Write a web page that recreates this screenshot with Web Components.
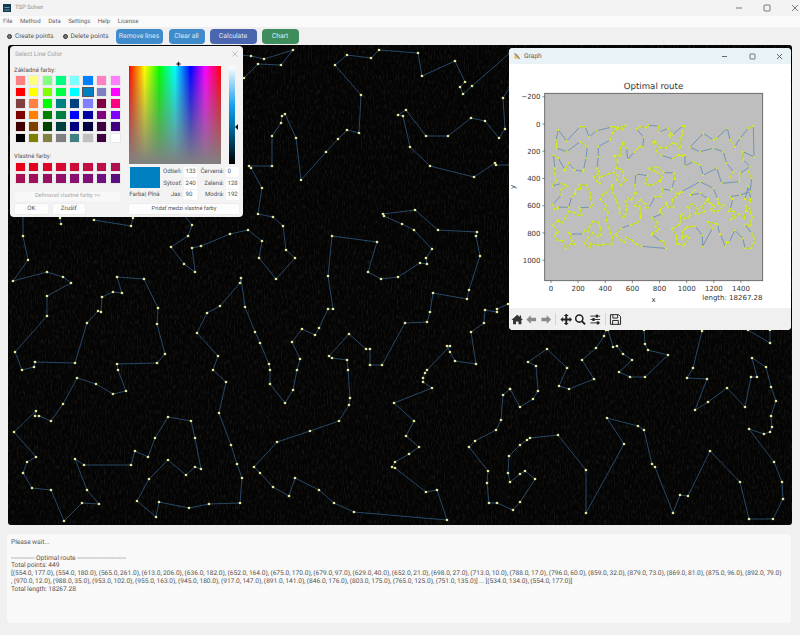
<!DOCTYPE html>
<html>
<head>
<meta charset="utf-8">
<title>TSP Solver</title>
<style>
  html, body { margin: 0; padding: 0; background: #f0f0f0; }
  body { width: 800px; height: 635px; overflow: hidden; font-family: Roboto, "Liberation Sans", sans-serif; text-rendering: geometricPrecision; }
  tsp-app { width: 800px; height: 635px; }
</style>
</head>
<body>
<tsp-app>
  <title-bar slot="title">TSP Solver</title-bar>
  <menu-bar slot="menu"></menu-bar>
  <tool-bar slot="tools">
    <radio-option>Create points</radio-option>
    <radio-option style="margin-left:9px">Delete points</radio-option>
    <app-button style="margin-left:7px;width:47px" color="#3f8bcb">Remove lines</app-button>
    <app-button style="margin-left:6px;width:36px" color="#3f8bcb">Clear all</app-button>
    <app-button style="margin-left:5px;width:47px" color="#4a66ae">Calculate</app-button>
    <app-button style="margin-left:5px;width:37px" color="#3f8c5c">Chart</app-button>
  </tool-bar>
  <tsp-stage slot="stage">
    <tsp-canvas></tsp-canvas>
    <color-dialog></color-dialog>
    <graph-window></graph-window>
  </tsp-stage>
  <log-panel slot="log">
    <div>Please wait...</div>
    <div>&nbsp;</div>
    <div>------------- Optimal route ---------------------------</div>
    <div>Total points: 449</div>
    <div>[(554.0, 177.0), (554.0, 180.0), (565.0, 261.0), (613.0, 206.0), (636.0, 182.0), (652.0, 164.0), (675.0, 170.0), (679.0, 97.0), (629.0, 40.0), (652.0, 21.0), (698.0, 27.0), (713.0, 10.0), (788.0, 17.0), (796.0, 60.0), (859.0, 32.0), (879.0, 73.0), (869.0, 81.0), (875.0, 96.0), (892.0, 79.0)</div>
    <div>, (970.0, 12.0), (988.0, 35.0), (953.0, 102.0), (955.0, 163.0), (945.0, 180.0), (917.0, 147.0), (891.0, 141.0), (846.0, 176.0), (803.0, 175.0), (765.0, 125.0), (751.0, 135.0)] ... [(534.0, 134.0), (554.0, 177.0)]</div>
    <div>Total length: 18267.28</div>
  </log-panel>
</tsp-app>

<script>
// route as it shows on the canvas, in page coordinates
const ROUTE = [
  [[23,215],[23,236],[28,260],[13,281],[47,272],[63,277],[71,283],[47,296],[47,316],[15,352],[22,370],[34,367],[35,362],[75,363],[87,323],[98,311],[101,312],[102,297],[113,292],[122,293],[117,277],[144,279],[158,308],[157,324],[165,354],[157,363],[117,364],[118,370],[126,391],[113,394],[96,384],[77,378],[63,404],[51,421],[39,416],[35,416],[36,411],[14,432],[36,457],[27,462],[23,473],[32,488],[51,490],[64,521],[82,503],[99,504],[87,490],[75,459],[84,465],[131,465],[135,451],[148,457],[155,438],[168,417],[191,421],[195,438],[201,469],[195,467],[186,475],[168,460],[149,479],[137,501],[156,517],[159,502],[189,508],[209,504],[240,503],[242,478],[237,464],[231,445],[219,413],[226,382],[213,370],[218,356],[197,333],[207,313],[220,306],[240,283],[241,278],[245,307],[255,332],[260,343],[269,364],[270,370],[270,384],[285,403],[293,390],[297,370],[300,359],[292,342],[302,329],[315,335],[319,328],[328,309],[333,309],[328,276],[332,236],[377,242],[368,272],[381,279],[398,277],[420,263],[427,264],[426,258],[432,249],[414,230],[402,224],[384,216],[383,214],[415,210],[438,230],[477,232],[476,236],[480,256],[469,290],[467,299],[433,293],[430,312],[427,322],[405,323],[382,365],[370,365],[370,349],[366,349],[349,334],[329,356],[332,358],[347,360],[348,370],[350,398],[349,405],[339,421],[310,431],[277,442],[254,467],[260,473],[273,487],[289,496],[295,478],[319,490],[334,503],[354,512],[447,520],[437,490],[426,492],[395,468],[392,467],[395,462],[409,454],[419,447],[406,436],[414,421],[394,403],[432,388],[423,382],[423,378],[425,373],[427,370],[450,346],[447,346],[450,352],[455,361],[476,364],[471,332],[484,323],[485,310],[497,312],[497,309],[508,304]],
  [[184,215],[192,225],[188,236],[171,247],[184,264],[195,272],[192,248],[201,246],[230,234],[248,230],[262,241],[259,258],[276,279],[295,258],[286,250],[283,226],[273,217],[258,214],[262,188],[251,168],[249,166],[272,166],[272,136],[281,123],[282,116],[285,114],[296,138],[301,180],[326,152],[338,139],[347,130],[359,133],[361,95],[335,65],[347,55],[371,58],[379,50],[418,53],[422,76],[455,61],[465,82],[460,87],[463,94],[472,86],[510,53]],
  [[510,87],[503,98],[505,129],[499,138],[485,121],[471,118],[448,136],[426,136],[406,110],[398,115],[403,116],[410,147],[430,166],[474,177],[495,163],[496,165],[510,165]],
  [[240,55],[251,56],[264,59],[293,50],[281,65],[258,64],[244,78]],
  [[94,220],[131,226],[133,218]],
  [[61,224],[60,218]],
  [[510,389],[503,395],[501,420],[496,430],[475,441],[469,447],[488,471],[487,483],[489,503],[497,503],[513,510],[520,502],[535,479],[525,471],[520,474],[510,482],[508,473],[509,456],[520,445],[527,440],[530,438],[558,435],[586,470],[586,513],[624,444],[607,418],[638,426],[644,430],[652,464],[655,467],[673,513],[680,495],[688,496],[710,451],[740,482],[749,519],[773,519],[783,499],[782,482],[774,462],[749,429],[764,434],[770,432],[772,427],[771,416],[776,401],[771,387],[766,367],[752,358],[757,377],[751,377],[745,407],[727,388],[708,402],[695,410],[707,379],[687,378],[693,368],[702,331]],
  [[510,389],[520,407],[533,399],[538,391],[536,366],[528,362],[547,349],[567,368],[559,386],[569,389],[594,379],[582,360],[596,348],[604,336],[606,330]],
  [[608,330],[613,347],[617,346],[623,354],[632,360],[619,372],[630,377],[645,377],[668,355],[648,350],[645,344],[644,330]],
  [[748,330],[770,343],[770,330]]
];

// parts of the route that are hidden on the canvas, read off the chart itself
const CHART_ONLY = [
  [[333,262],[290,272],[268,290],[255,260],[240,260],[200,303],[175,270],[168,300],[170,325],[200,335],[240,305],[262,320],[258,355],[250,392]],
  [[225,390],[205,370],[195,390],[175,355],[160,345],[165,385]],
  [[291,385],[295,350],[295,320],[330,300],[338,278]],
  [[547,258],[555,258],[547,275]],
  [[547,349],[555,345],[555,378],[580,365],[600,375],[610,405],[650,385],[665,430],[718,425],[720,400],[750,380],[730,360],[728,335],[762,350],[760,258],[745,265],[720,295],[705,320],[690,300],[682,265],[650,295],[640,300],[610,280],[570,322],[600,335],[640,325],[670,335],[680,370],[700,395],[690,410]],
  [[543,456],[600,425],[640,445],[653,476]],
  [[623,476],[600,460],[570,465],[585,450]],
  [[698,478],[690,470],[720,465],[750,455],[755,415],[745,395]],
  [[735,477],[745,440],[752,477]]
];

class TsPApp extends HTMLElement {
  constructor() {
    super();
    this.attachShadow({ mode: "open" });
    this.shadowRoot.innerHTML = `
      <style>
        :host { display: flex; flex-direction: column; color: #333; }
        .log { padding: 9px 9px 12px 7px; }
      </style>
      <slot name="title"></slot>
      <slot name="menu"></slot>
      <slot name="tools"></slot>
      <slot name="stage"></slot>
      <div class="log"><slot name="log"></slot></div>
    `;
  }
}

class TitleBar extends HTMLElement {
  constructor() {
    super();
    this.attachShadow({ mode: "open" });
    this.shadowRoot.innerHTML = `
      <style>
        :host { display: flex; align-items: center; height: 16px; background: #f3f3f3; font-size: 5.9px; color: #8a8a8a; padding-left: 3px; }
        .logo { width: 8px; height: 8px; margin-right: 4px; display: block; }
        .spacer { flex: 1; }
        svg.ctl { width: 8px; height: 8px; display: block; margin-left: 20px; }
      </style>
      <svg class="logo" viewBox="0 0 8 8"><rect width="8" height="8" fill="#17394c"/><path d="M1.5 3.5h5M1.5 6h5" stroke="#7fc6d8" stroke-width=".7"/></svg>
      <slot></slot>
      <span class="spacer"></span>
      <svg class="ctl" viewBox="0 0 8 8"><path d="M1 4h6" stroke="#555" stroke-width=".8"/></svg>
      <svg class="ctl" viewBox="0 0 8 8"><rect x="1" y="1" width="6" height="6" rx=".8" fill="none" stroke="#555" stroke-width=".8"/></svg>
      <svg class="ctl" style="margin-right:1px" viewBox="0 0 8 8"><path d="M1 1l6 6M7 1l-6 6" stroke="#555" stroke-width=".8"/></svg>
    `;
  }
}

class MenuBar extends HTMLElement {
  constructor() {
    super();
    this.attachShadow({ mode: "open" });
    const items = ["File", "Method", "Data", "Settings", "Help", "License"];
    this.shadowRoot.innerHTML = `
      <style>
        :host { display: flex; align-items: center; gap: 7.5px; height: 11px; background: #fafafa; padding-left: 3px; font-size: 6.05px; color: #666; }
      </style>
      ${items.map(i => `<span>${i}</span>`).join("")}
    `;
  }
}

class ToolBar extends HTMLElement {
  constructor() {
    super();
    this.attachShadow({ mode: "open" });
    this.shadowRoot.innerHTML = `
      <style>
        :host { display: flex; align-items: center; height: 18px; background: #f0f0f0; padding-left: 7px; box-sizing: border-box; }
      </style>
      <slot></slot>
    `;
  }
}

class RadioOption extends HTMLElement {
  constructor() {
    super();
    this.attachShadow({ mode: "open" });
    this.shadowRoot.innerHTML = `
      <style>
        :host { display: inline-flex; align-items: center; gap: 3px; font-size: 6.5px; color: #555; }
        i { border-radius: 50%; background: #777; border: 1px solid #333; width: 3px; height: 3px; display: block; }
      </style>
      <i></i><slot></slot>
    `;
  }
}

class AppButton extends HTMLElement {
  constructor() {
    super();
    this.attachShadow({ mode: "open" });
    this.shadowRoot.innerHTML = `
      <style>
        :host { display: inline-flex; align-items: center; justify-content: center; height: 15px; border-radius: 4px; font-size: 6.8px; color: #dfeaf5; background: var(--bg); white-space: nowrap; }
      </style>
      <slot></slot>
    `;
    this.style.setProperty("--bg", this.getAttribute("color"));
  }
}

class TspStage extends HTMLElement {
  constructor() {
    super();
    this.attachShadow({ mode: "open" });
    this.shadowRoot.innerHTML = `
      <style>
        :host { display: block; position: relative; margin: 0 8px; height: 480px; }
      </style>
      <slot></slot>
    `;
  }
}

function routeMarkup(lineColor, width, dotColor, r, project, extra, glow) {
  let s = "";
  const all = ROUTE.map(seg => seg.map(project)).concat(extra || []);
  for (const seg of all) {
    s += `<polyline points="${seg.map(p => p[0].toFixed(1) + "," + p[1].toFixed(1)).join(" ")}" fill="none" stroke="${lineColor}" stroke-width="${width}"/>`;
    if (!glow) continue;
    // short hops on the chart sit so close that their markers read as one yellow band
    for (let i = 1; i < seg.length; i++) {
      const a = seg[i - 1], b = seg[i];
      if (Math.hypot(a[0] - b[0], a[1] - b[1]) < glow) {
        s += `<line x1="${a[0].toFixed(1)}" y1="${a[1].toFixed(1)}" x2="${b[0].toFixed(1)}" y2="${b[1].toFixed(1)}" stroke="${dotColor}" stroke-width="1"/>`;
      }
    }
  }
  for (const seg of all) {
    for (const p of seg) {
      s += `<circle cx="${p[0].toFixed(1)}" cy="${p[1].toFixed(1)}" r="${r}" fill="${dotColor}"/>`;
    }
  }
  return s;
}

class TspCanvas extends HTMLElement {
  constructor() {
    super();
    this.attachShadow({ mode: "open" });
    this.shadowRoot.innerHTML = `
      <style>
        :host { display: block; width: 784px; height: 480px; background: #040404; border-radius: 3px; overflow: hidden; }
        svg { display: block; width: 784px; height: 480px; }
      </style>
      <svg viewBox="8 45 784 480">
        <filter id="grain" x="0" y="0" width="100%" height="100%">
          <feTurbulence type="fractalNoise" baseFrequency="0.7 0.2" numOctaves="2" seed="4"/>
          <feColorMatrix values="0 0 0 0 .34  0 0 0 0 .3  0 0 0 0 .22  0 0 0 1.6 -.72"/>
        </filter>
        <rect x="8" y="45" width="784" height="480" filter="url(#grain)" opacity=".2"/>
        ${routeMarkup("#30587e", 0.8, "#e2e89a", 1.35, p => p)}
      </svg>
    `;
  }
}

const BASIC_COLORS = [
  "#ff8080","#ffff80","#80ff80","#00ff80","#80ffff","#0080ff","#ff80c0","#ff80ff",
  "#ff0000","#ffff00","#80ff00","#00ff40","#00ffff","#0080c0","#8080c0","#ff00ff",
  "#804040","#ff8040","#00ff00","#008080","#004080","#8080ff","#800040","#ff0080",
  "#800000","#ff8000","#008000","#008040","#0000ff","#0000a0","#800080","#8000ff",
  "#400000","#804000","#004000","#004040","#000080","#000040","#400040","#400080",
  "#000000","#808000","#808040","#808080","#408080","#c0c0c0","#400040","#ffffff"
];
const CUSTOM_COLORS = [
  "#e8001a","#e00420","#dc0628","#d40a30","#cc0c38","#c40e42","#bc0f48","#b0104e",
  "#a81054","#a0105c","#981062","#90106a","#881070","#801078","#701080","#5c1080"
];

class ColorDialog extends HTMLElement {
  constructor() {
    super();
    this.attachShadow({ mode: "open" });
    const swatch = (c, i) => `<i style="background:${c}" class="${i === 13 ? "sel" : ""}"></i>`;
    const field = (label, value) => `<span class="lb">${label}</span><span class="in">${value}</span>`;
    this.shadowRoot.innerHTML = `
      <style>
        :host { position: absolute; left: 2px; top: 1px; width: 233px; height: 171px; background: #f3f3f3; border-radius: 4px; font-size: 6.1px; color: #555; display: flex; flex-direction: column; box-sizing: border-box; }
        .head { height: 16px; flex: none; display: flex; align-items: center; justify-content: space-between; padding: 0 5px; color: #a0a0a0; font-size: 6.3px; }
        .body { flex: 1; display: grid; grid-template-columns: 106px 110px; column-gap: 9px; padding: 4px; }
        .left, .right { display: flex; flex-direction: column; }
        .cap { height: 9px; line-height: 9px; }
        .grid { display: grid; grid-template-columns: repeat(8, 9.4px); column-gap: 4.2px; row-gap: 3px; grid-auto-rows: 8.5px; margin: 1px 0 0 1.5px; }
        .grid i { display: block; box-shadow: 0 0 0 .5px #ddd; }
        .grid i.sel { box-shadow: 0 0 0 1px #555; }
        .spectrum { height: 97.5px; width: 91.5px; background: linear-gradient(to bottom, rgba(128,128,128,0), #808080), linear-gradient(to right, #f00, #ff0 17%, #0f0 33%, #0ff 50%, #00f 67%, #f0f 83%, #f00); position: relative; }
        .spectrum::after { content: "+"; position: absolute; left: 47px; top: -5px; font-size: 9px; line-height: 9px; color: #111; font-weight: bold; }
        .top { display: flex; }
        .bar { width: 6px; height: 97.5px; margin-left: 8px; background: linear-gradient(to bottom, #fff, #18a0f0 40%, #0080c0 55%, #000); }
        .arrow { width: 0; height: 0; align-self: flex-start; margin: 57.5px 0 0 .5px; border: 3.5px solid transparent; border-left-width: 0; border-right: 3.5px solid #111; }
        .mid { display: flex; margin-top: 3.5px; }
        .preview { width: 31px; display: flex; flex-direction: column; align-items: center; }
        .preview b { display: block; width: 30px; height: 21px; background: #0080c0; margin-bottom: 1.5px; }
        .preview span { white-space: nowrap; line-height: 9px; }
        .fields { margin-left: 3px; display: grid; grid-template-columns: 19px 13px 25px 13px; grid-auto-rows: 10px; column-gap: 2px; row-gap: 1.6px; }
        .lb { text-align: right; line-height: 10px; white-space: nowrap; }
        .in { background: #fff; line-height: 10px; padding-left: 1.5px; color: #555; }
        .btn { height: 10px; line-height: 10px; background: #fdfdfd; text-align: center; border-radius: 1.5px; color: #555; white-space: nowrap; box-shadow: 0 0 0 .4px #e8e8e8; }
        .def { background: #f8f8f8; color: #aaa; width: 105px; margin-top: 9px; height: 9px; line-height: 9px; margin-left: 1px; box-shadow: none; font-size: 5.7px; }
        .row { display: flex; gap: 5px; margin: 3.5px 0 0 1px; }
        .row .btn { width: 32.5px; }
        .add { margin-top: auto; font-size: 5.6px; }
      </style>
      <div class="head"><span>Select Line Color</span>
        <svg width="6" height="6" viewBox="0 0 6 6"><path d="M.5.5l5 5M5.5.5l-5 5" stroke="#aaa" stroke-width=".7"/></svg>
      </div>
      <div class="body">
        <div class="left">
          <div class="cap">Základné farby:</div>
          <div class="grid">${BASIC_COLORS.map(swatch).join("")}</div>
          <div class="cap" style="margin-top:9.5px">Vlastné farby:</div>
          <div class="grid" style="margin-top:2px">${CUSTOM_COLORS.map(c => swatch(c)).join("")}</div>
          <div class="btn def">Definovať vlastné farby &gt;&gt;</div>
          <div class="row"><span class="btn">OK</span><span class="btn">Zrušiť</span></div>
        </div>
        <div class="right">
          <div class="top"><div class="spectrum"></div><div class="bar"></div><div class="arrow"></div></div>
          <div class="mid">
            <div class="preview"><b></b><span>Farba| Plná</span></div>
            <div class="fields">
              ${field("Odtieň:", "133")}${field("Červená:", "0")}
              ${field("Sýtosť:", "240")}${field("Zelená:", "128")}
              ${field("Jas:", "90")}${field("Modrá:", "192")}
            </div>
          </div>
          <div class="btn add">Pridať medzi vlastné farby</div>
        </div>
      </div>
    `;
  }
}

class RouteChart extends HTMLElement {
  constructor() {
    super();
    this.attachShadow({ mode: "open" });
    const px = v => 551 + v * 0.1357;
    const py = v => 124 + v * 0.1362;
    const project = p => [551 + (p[0] - 8) * 0.262, 124 + (p[1] - 45) * 0.262];
    const extra = CHART_ONLY.map(seg => seg.map(p => [500 + p[0] / 3, 40 + p[1] / 3]));
    const xt = [0,200,400,600,800,1000,1200,1400], yt = [-200,0,200,400,600,800,1000];
    this.shadowRoot.innerHTML = `
      <style>
        :host { display: block; width: 282px; height: 244px; background: #fff; }
        svg { display: block; width: 282px; height: 244px; }
        text { font-family: "DejaVu Sans", sans-serif; fill: #333; }
      </style>
      <svg viewBox="509 64 282 244">
        <rect x="544.7" y="93.3" width="218" height="187.4" fill="#bebebe"/>
        ${routeMarkup("#4f83ad", 0.7, "#dcee14", 0.95, project, extra, 9)}
        <rect x="544.7" y="93.3" width="218" height="187.4" fill="none" stroke="#555" stroke-width=".8"/>
        ${xt.map(v => `<path d="M${px(v)} 280.7v2.4" stroke="#444" stroke-width=".6"/><text x="${px(v)}" y="290.5" font-size="7" text-anchor="middle">${v}</text>`).join("")}
        ${yt.map(v => `<path d="M544.7 ${py(v)}h-2.4" stroke="#444" stroke-width=".6"/><text x="540.5" y="${py(v) + 2.6}" font-size="7" text-anchor="end">${v < 0 ? "\u2212" + (-v) : v}</text>`).join("")}
        <text x="653.5" y="88.8" font-size="8.6" text-anchor="middle">Optimal route</text>
        <text x="653.5" y="301.5" font-size="7" text-anchor="middle">x</text>
        <text transform="translate(515 187) rotate(-90)" font-size="7" text-anchor="middle">y</text>
        <text x="762.5" y="299.5" font-size="7" text-anchor="end">length: 18267.28</text>
      </svg>
    `;
  }
}

class GraphWindow extends HTMLElement {
  constructor() {
    super();
    this.attachShadow({ mode: "open" });
    this.shadowRoot.innerHTML = `
      <style>
        :host { position: absolute; left: 501px; top: 3px; width: 282px; height: 282px; background: #fff; border-radius: 4px; overflow: hidden; display: flex; flex-direction: column; font-size: 6.6px; color: #555; }
        .head { height: 16px; flex: none; background: #e9f3f7; display: flex; align-items: center; padding-left: 4px; gap: 3px; }
        .spacer { flex: 1; }
        .head svg.ctl { width: 7px; height: 7px; margin-right: 17.5px; display: block; }
        .head svg.ctl:last-child { margin-right: 8px; }
        .tools { height: 22px; flex: none; background: #f0f0f0; display: flex; align-items: center; padding-left: .5px; }
        .tools svg { width: 14.5px; height: 13px; display: block; flex: none; }
        .tools u { display: block; width: 1px; height: 12px; background: #d4d4d4; flex: none; margin: 0 2.4px; }
      </style>
      <div class="head">
        <svg width="8" height="8" viewBox="0 0 8 8"><path d="M1 1c3 0 5 2 6 6C5 7 2 6 1 1z" fill="#c9b98a"/><path d="M1.500 1.500L7 7" stroke="#555" stroke-width=".6"/><circle cx="2.500" cy="5.500" r="1.300" fill="#e8c040"/></svg>
        <span>Graph</span>
        <span class="spacer"></span>
        <svg class="ctl" viewBox="0 0 7 7"><path d="M1 3.500h5" stroke="#444" stroke-width=".8"/></svg>
        <svg class="ctl" viewBox="0 0 7 7"><rect x="1" y="1" width="5" height="5" rx=".6" fill="none" stroke="#444" stroke-width=".7"/></svg>
        <svg class="ctl" viewBox="0 0 7 7"><path d="M1 1l5 5M6 1l-5 5" stroke="#444" stroke-width=".8"/></svg>
      </div>
      <route-chart></route-chart>
      <div class="tools">
        <svg viewBox="0 0 15 13"><path d="M7.500 1.500L1.500 7h1.700v4.500h3v-3h2.600v3h3V7h1.700l-2-1.800V2.300h-1.500v1.500z" fill="#333"/></svg>
        <svg viewBox="0 0 15 13"><path d="M2.500 6.500L7 2v2.800h5.500v3.400H7V11z" fill="#8a8a8a"/></svg>
        <svg viewBox="0 0 15 13"><path d="M12.500 6.500L8 2v2.800H2.500v3.400H8V11z" fill="#8a8a8a"/></svg>
        <u></u>
        <svg viewBox="0 0 15 13"><path d="M7.500 .5L10 3H8.500v2.500H11V4l2.500 2.500L11 9V7.500H8.500V10H10l-2.500 2.500L5 10h1.500V7.500H4V9L1.500 6.500 4 4v1.500h2.500V3H5z" fill="#222"/></svg>
        <svg viewBox="0 0 15 13"><circle cx="6.500" cy="5.500" r="3.700" fill="none" stroke="#222" stroke-width="1.600"/><path d="M9.200 8.200l3.300 3.300" stroke="#222" stroke-width="2"/></svg>
        <svg viewBox="0 0 15 13"><path d="M2.500 3h10M2.500 6.500h10M2.500 10h10" stroke="#333" stroke-width="1"/><rect x="8" y="1.500" width="2.400" height="3" fill="#222"/><rect x="4.500" y="5" width="2.400" height="3" fill="#222"/><rect x="9" y="8.500" width="2.400" height="3" fill="#222"/></svg>
        <u></u>
        <svg viewBox="0 0 15 13"><path d="M2.500 1.500h8.500l2 2v8h-10.500z M5 1.500v3.500h5v-3.500 M4.800 11.500v-4h5.900v4" fill="none" stroke="#222" stroke-width="1"/></svg>
      </div>
    `;
  }
}

class LogPanel extends HTMLElement {
  constructor() {
    super();
    this.attachShadow({ mode: "open" });
    this.shadowRoot.innerHTML = `
      <style>
        :host { display: block; height: 89px; box-sizing: border-box; background: #f9f9f9; border-radius: 4px; padding: 5px 4px; font-family: Roboto, "Liberation Sans", sans-serif; font-size: 6.6px; word-spacing: -.3px; line-height: 7.75px; color: #555; white-space: nowrap; width: 784px; overflow: hidden; }
      </style>
      <slot></slot>
    `;
  }
}

customElements.define("tsp-app", TsPApp);
customElements.define("title-bar", TitleBar);
customElements.define("menu-bar", MenuBar);
customElements.define("tool-bar", ToolBar);
customElements.define("radio-option", RadioOption);
customElements.define("app-button", AppButton);
customElements.define("tsp-stage", TspStage);
customElements.define("tsp-canvas", TspCanvas);
customElements.define("color-dialog", ColorDialog);
customElements.define("route-chart", RouteChart);
customElements.define("graph-window", GraphWindow);
customElements.define("log-panel", LogPanel);
</script>
</body>
</html>
